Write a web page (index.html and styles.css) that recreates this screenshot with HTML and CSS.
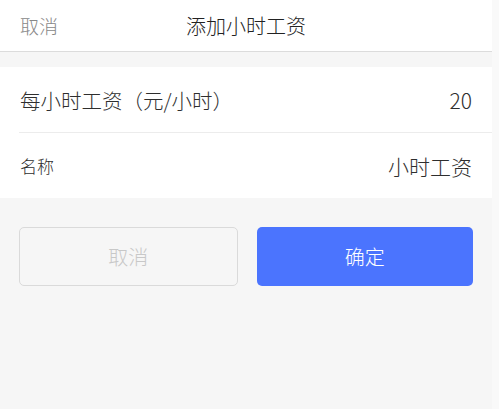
FILE: index.html
```html
<!DOCTYPE html>
<html lang="zh-CN">
<head>
<meta charset="utf-8">
<title>添加小时工资</title>
<link rel="stylesheet" href="styles.css">
</head>
<body>
<div class="app">
  <header class="header">
    <span class="header-cancel">取消</span>
    <span class="header-title">添加小时工资</span>
    <span class="header-spacer"></span>
  </header>
  <section class="form">
    <div class="row">
      <span class="label">每小时工资（元/小时）</span>
      <span class="value">20</span>
    </div>
    <div class="row">
      <span class="label label-small">名称</span>
      <span class="value">小时工资</span>
    </div>
  </section>
  <div class="actions">
    <button class="btn btn-cancel">取消</button>
    <button class="btn btn-ok">确定</button>
  </div>
</div>
</body>
</html>
```
FILE: styles.css
```css
html, body {
  margin: 0;
  padding: 0;
  height: 100%;
}
body {
  background: #f9f9f9;
  font-family: "Noto Sans CJK SC", "Noto Sans", sans-serif;
  font-weight: 300;
}
.app {
  width: 492px;
  min-height: 100%;
  background: #f6f6f6;
}
.header {
  height: 51px;
  background: #fff;
  border-bottom: 1px solid #dcdcdc;
  display: grid;
  grid-template-columns: 1fr auto 1fr;
  align-items: center;
  padding: 0 20px;
}
.header-cancel {
  font-size: 19px;
  color: #888;
}
.header-title {
  font-size: 20px;
  color: #222;
}
.form {
  margin-top: 15px;
  background: #fff;
  padding-left: 19px;
}
.row {
  height: 65px;
  display: flex;
  align-items: center;
  justify-content: space-between;
  padding-right: 20px;
  box-sizing: border-box;
}
.row + .row {
  height: 66px;
  border-top: 1px solid #ececec;
}
.label {
  font-size: 20.5px;
  color: #2e2e2e;
  padding-left: 1px;
}
.label-small {
  font-size: 17px;
}
.value {
  font-size: 21px;
  color: #2e2e2e;
}
.actions {
  display: flex;
  gap: 19px;
  padding: 29px 19px 0;
}
.btn {
  flex: 1;
  height: 59px;
  border-radius: 5px;
  font-family: inherit;
  font-weight: 300;
  font-size: 20px;
  box-sizing: border-box;
}
.btn-cancel {
  background: #f6f6f6;
  border: 1px solid #dadada;
  color: #c8c8c8;
}
.btn-ok {
  background: #4b74fe;
  border: none;
  color: #fff;
}
```
